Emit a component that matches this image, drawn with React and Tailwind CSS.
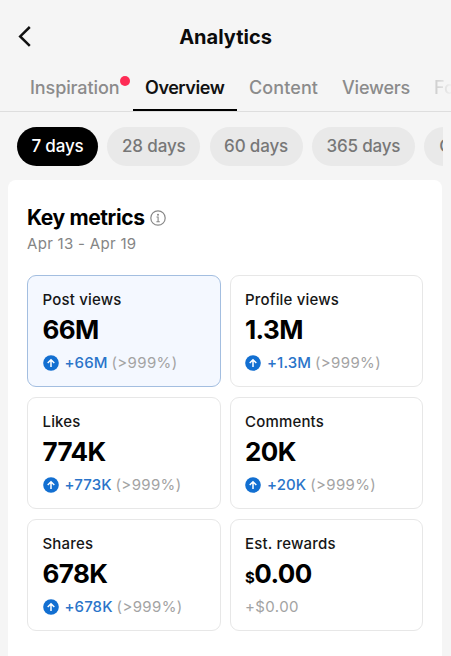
import React from 'react';

const tabs = [
  { label: 'Inspiration', box: 'w-[116px] pl-[13px]', tone: 'text-[#8b8b8b] tracking-[-0.1px]', dot: true },
  { label: 'Overview', box: 'w-[104px] pl-[12px]', tone: 'text-[#111] font-semibold tracking-[-0.45px]', active: true },
  { label: 'Content', box: 'w-[93px] pl-[12px]', tone: 'text-[#8b8b8b] tracking-[0.1px]' },
  { label: 'Viewers', box: 'w-[92px] pl-[12px]', tone: 'text-[#8b8b8b] tracking-[-0.2px]' },
  { label: 'Followers', box: 'w-[100px] pl-[12px]', tone: 'bg-linear-to-r from-[#b4b4b4] to-[#f5f5f5] to-[32px] bg-clip-text text-transparent' },
];

const ranges = [
  { label: '7 days', style: 'w-[81px] bg-black text-white tracking-[-0.15px]' },
  { label: '28 days', style: 'w-[93px] bg-[#e9e9e9] text-[#777] tracking-[-0.15px]' },
  { label: '60 days', style: 'w-[93px] bg-[#e9e9e9] text-[#777] tracking-[-0.15px]' },
  { label: '365 days', style: 'w-[103px] bg-[#e9e9e9] text-[#777] tracking-[-0.2px]' },
];

const metrics = [
  { name: 'Post views', value: '66M', change: '+66M', selected: true },
  { name: 'Profile views', value: '1.3M', change: '+1.3M' },
  { name: 'Likes', value: '774K', change: '+773K' },
  { name: 'Comments', value: '20K', change: '+20K' },
  { name: 'Shares', value: '678K', change: '+678K' },
  { name: 'Est. rewards', currency: '$', value: '0.00', flat: '+$0.00' },
];

function UpBadge() {
  return (
    <svg className="mr-[6px] size-4 shrink-0" viewBox="0 0 16 16" fill="none">
      <circle cx="8" cy="8" r="7.8" fill="#126fd1" />
      <path d="M8 12V5M4.7 8L8 4.7L11.3 8" stroke="#fff" strokeWidth="1.5" />
    </svg>
  );
}

function Metric({ name, value, currency, change, flat, selected }) {
  return (
    <div
      className={
        'h-[112px] rounded-[9px] border pl-[14.5px] pt-[14px] ' +
        (selected ? 'border-[#a3bee0] bg-[#f4f8ff]' : 'border-[#e7e7e7] bg-white')
      }
    >
      <div className="h-5 text-[15px] font-medium leading-5 tracking-[0.18px] text-[#161616]">{name}</div>
      <div className="mt-1 flex h-8 items-baseline text-[26px] font-bold leading-8 tracking-[-0.6px] text-black">
        {currency && <span className="text-[15px]">{currency}</span>}
        {value}
      </div>
      <div className="mt-[7px] flex h-5 items-center whitespace-nowrap text-[15px] leading-5">
        {change ? (
          <>
            <UpBadge />
            <span className="font-medium tracking-[0.1px] text-[#2a74c9]">{change}</span>
            <span className="ml-1 tracking-[0.35px] text-[#a3a3a3]">{'(>999%)'}</span>
          </>
        ) : (
          <span className="tracking-[0.4px] text-[#a3a3a3]">{flat}</span>
        )}
      </div>
    </div>
  );
}

export default function App() {
  return (
    <div className="flex h-[656px] w-[451px] flex-col overflow-hidden bg-[#f5f5f5] font-['Inter','Liberation_Sans',sans-serif]">
      <header className="grid h-[72px] shrink-0 grid-cols-[1fr_auto_1fr] items-center">
        <svg className="ml-[17px] h-6 w-4" viewBox="0 0 16 24" fill="none">
          <path d="M12.8 3L3.2 12.4L12.8 21.8" stroke="#111" strokeWidth="2.5" />
        </svg>
        <h1 className="pt-px text-[20px] font-bold leading-7 tracking-[0px] text-[#0b0b0b]">Analytics</h1>
      </header>

      <nav className="flex h-10 shrink-0 overflow-hidden border-b border-[#dedede] pl-[17px]">
        {tabs.map((t) => (
          <div key={t.label} className={'relative h-[39px] shrink-0 whitespace-nowrap pt-1 text-[18px] font-medium leading-6 ' + t.box + ' ' + t.tone}>
            {t.label}
            {t.dot && <span className="absolute left-[103px] top-[4px] size-[10px] rounded-full bg-[#fe2c55]" />}
            {t.active && <span className="absolute bottom-0 left-0 h-[2px] w-full bg-black" />}
          </div>
        ))}
      </nav>

      <div className="mr-2 flex h-[68px] shrink-0 gap-[9.3px] overflow-hidden pl-[17px] pt-[14.5px]">
        {ranges.map((r) => (
          <div key={r.label} className={'flex h-[39px] shrink-0 items-center justify-center rounded-full pt-px text-[17px] font-medium ' + r.style}>
            {r.label}
          </div>
        ))}
        <div className="flex h-[39px] w-[110px] shrink-0 items-center rounded-full bg-[#e9e9e9] pl-[15px] pt-px text-[17px] font-medium text-[#777]">Custom</div>
      </div>

      <main className="ml-2 mr-[9px] flex-1 rounded-t-lg bg-white px-[19px] pt-[24px]">
        <div className="flex h-7 items-center">
          <h2 className="text-[21px] font-bold leading-7 tracking-[-0.4px] text-black">Key metrics</h2>
          <svg className="ml-[5px] size-4" viewBox="0 0 16 16" fill="none">
            <circle cx="8" cy="8" r="7.2" stroke="#888" strokeWidth="1.2" />
            <circle cx="8" cy="4.7" r="1" fill="#888" />
            <path d="M6.5 7H8.1V11.7M6.4 11.7H9.8" stroke="#888" strokeWidth="1.1" />
          </svg>
        </div>
        <p className="mt-[1px] text-[15px] leading-[22px] tracking-[0.3px] text-[#858585]">Apr 13 - Apr 19</p>
        <div className="mt-5 grid grid-cols-2 gap-x-[9px] gap-y-[10px]">
          {metrics.map((m) => (
            <Metric key={m.name} {...m} />
          ))}
        </div>
      </main>
    </div>
  );
}
